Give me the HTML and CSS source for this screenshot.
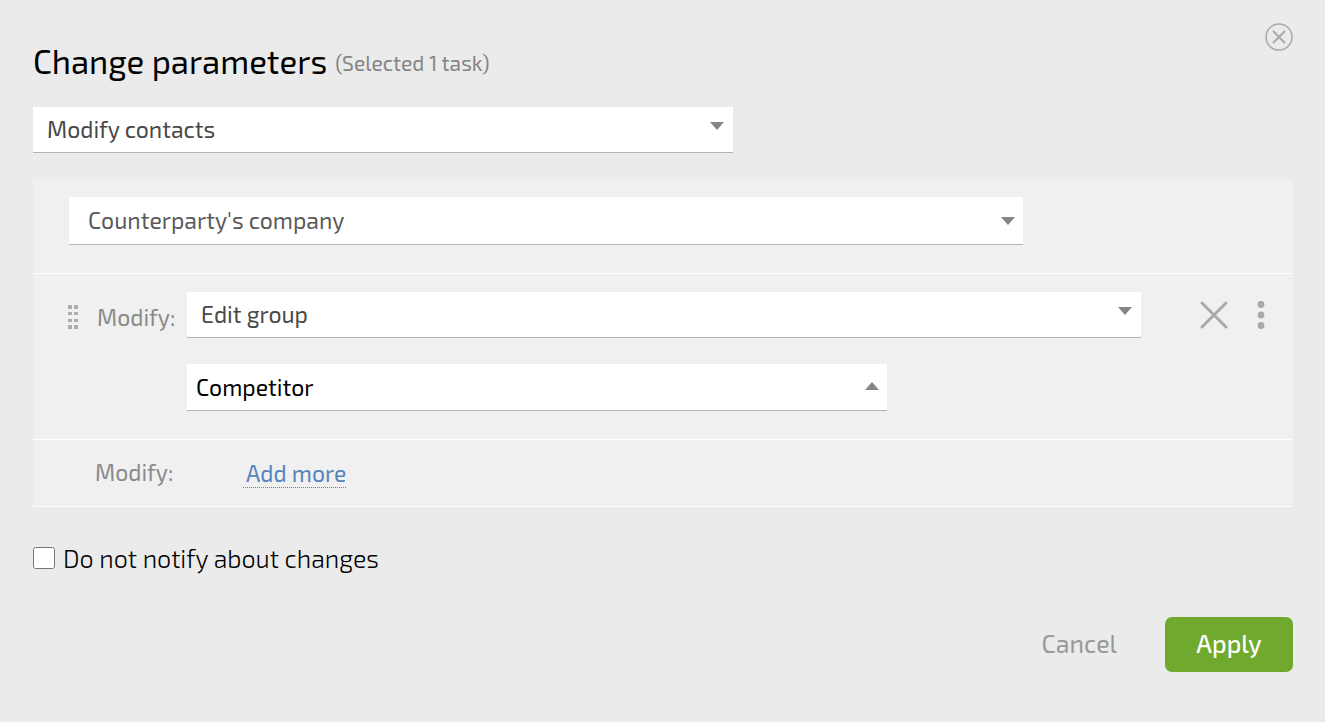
FILE: index.html
```html
<!DOCTYPE html>
<html lang="en">
<head>
    <meta charset="UTF-8">
    <meta name="viewport" content="width=device-width, initial-scale=1.0">
    <title>Change parameters</title>
    <link rel="stylesheet" href="styles.css">
</head>
<body>
    <form class="dialog">
        <header class="header">
            <div class="heading">
                <h1>Change parameters</h1>
                <span class="selected">(Selected 1 task)</span>
            </div>
            <button type="button" class="icon-button" aria-label="Close">
                <svg width="28" height="28" viewBox="0 0 28 28">
                    <circle cx="14" cy="14" r="13"/>
                    <path d="M8.5 8.5 19.5 19.5M19.5 8.5 8.5 19.5"/>
                </svg>
            </button>
        </header>

        <div class="select medium">
            <select aria-label="Action">
                <option>Modify contacts</option>
            </select>
        </div>

        <div class="panel">
            <div class="row">
                <div class="select large company">
                    <select aria-label="Contact">
                        <option>Counterparty's company</option>
                    </select>
                </div>
            </div>

            <div class="row rule">
                <svg class="drag" width="10" height="24" viewBox="0 0 10 24">
                    <path d="M0 0h4v4H0zM6 0h4v4H6zM0 7h4v3H0zM6 7h4v3H6zM0 14h4v3H0zM6 14h4v3H6zM0 20h4v4H0zM6 20h4v4H6z"/>
                </svg>
                <label class="label" for="operation">Modify:</label>
                <div class="fields">
                    <div class="select large">
                        <select id="operation">
                            <option>Edit group</option>
                        </select>
                    </div>
                    <div class="select medium open">
                        <select aria-label="Group">
                            <option>Competitor</option>
                        </select>
                    </div>
                </div>
                <div class="tools">
                    <button type="button" class="icon-button remove" aria-label="Remove">
                        <svg width="28" height="28" viewBox="0 0 28 28">
                            <path d="M2 2 26 26M26 2 2 26"/>
                        </svg>
                    </button>
                    <button type="button" class="icon-button more" aria-label="More">
                        <svg width="8" height="28" viewBox="0 0 8 28">
                            <circle cx="4" cy="3.5" r="3.4"/>
                            <circle cx="4" cy="14" r="3.4"/>
                            <circle cx="4" cy="24.5" r="3.4"/>
                        </svg>
                    </button>
                </div>
            </div>

            <div class="row add">
                <span class="label">Modify:</span>
                <a class="link" href="#">Add more</a>
            </div>
        </div>

        <label class="check">
            <input type="checkbox">
            Do not notify about changes
        </label>

        <footer class="footer">
            <button type="button" class="cancel">Cancel</button>
            <button type="submit" class="apply">Apply</button>
        </footer>
    </form>
</body>
</html>
```
FILE: styles.css
```css
* {
    box-sizing: border-box;
}
body {
    margin: 0;
    background-color: #ebebeb;
    font-family: "Exo 2", Roboto, sans-serif;
    font-size: 23px;
    line-height: 28px;
    color: #000;
}
select, button, input {
    font: inherit;
}
button {
    border: none;
    background: none;
    padding: 0;
}
.dialog {
    padding: 23px 32px 50px 33px;
}
.header {
    display: flex;
    justify-content: space-between;
    align-items: flex-start;
    margin-bottom: 26px;
}
.heading {
    display: flex;
    align-items: center;
    gap: 8px;
    padding-top: 18px;
}
h1 {
    margin: 0;
    font-size: 33px;
    line-height: 40px;
    font-weight: normal;
}
.selected {
    padding-top: 3px;
    font-size: 21px;
    color: #848484;
}
.icon-button {
    display: flex;
}
.icon-button svg {
    fill: none;
    stroke: #a9a9a9;
    stroke-width: 2;
    stroke-linecap: round;
}
.icon-button svg circle {
    stroke-width: 1.5;
}
.select {
    position: relative;
    width: 100%;
}
.select::after {
    content: "";
    position: absolute;
    top: 15px;
    right: 9px;
    width: 14px;
    height: 8px;
    background-color: #858585;
    clip-path: polygon(0 0, 100% 0, 50% 100%);
    pointer-events: none;
}
.select select {
    display: block;
    appearance: none;
    width: 100%;
    height: 46px;
    padding: 0 30px 2px 14px;
    border: none;
    border-bottom: 1px solid #b4b4b4;
    border-radius: 0;
    background-color: #fff;
    color: #484848;
}
.medium {
    max-width: 700px;
}
.large {
    max-width: 954px;
}
.company::after {
    top: 20px;
    right: 8px;
}
.company select {
    height: 48px;
    padding-left: 19px;
    color: #5a5a5a;
}
.open::after {
    top: 18px;
    right: 8px;
    clip-path: polygon(50% 0, 100% 100%, 0 100%);
}
.open select {
    height: 47px;
    padding: 0 30px 0 9px;
    color: #000;
}
.panel {
    margin-top: 26px;
    background-color: #f0f0f0;
}
.row {
    display: flex;
    align-items: flex-start;
    padding: 18px 28px 28px 36px;
    border-bottom: 1px solid #fff;
}
.drag {
    flex: none;
    margin: 13px 19px 0 0;
    fill: #adadad;
}
.label {
    flex: none;
    width: 90px;
    color: #8a8a8a;
}
.rule {
    padding-left: 35px;
}
.rule .label {
    margin-top: 11px;
}
.fields {
    display: grid;
    flex: 1;
    gap: 26px;
}
.tools {
    display: flex;
    gap: 29px;
    margin: 9px 0 0 28px;
}
.remove svg {
    stroke-width: 3;
}
.more svg {
    fill: #a9a9a9;
    stroke: none;
}
.add {
    gap: 58px;
    padding: 18px 28px 18px 62px;
}
.link {
    padding: 1px 0 0 3px;
    border-bottom: 1px dotted #5783bd;
    color: #5783bd;
    text-decoration: none;
}
.check {
    display: flex;
    align-items: center;
    gap: 8px;
    width: fit-content;
    margin-top: 37px;
    font-size: 25px;
    font-weight: 300;
}
.check input {
    width: 22px;
    height: 22px;
    margin: 0;
}
.footer {
    display: flex;
    justify-content: flex-end;
    gap: 48px;
    margin-top: 45px;
    font-size: 25px;
}
.footer button {
    height: 55px;
    padding-bottom: 3px;
}
.cancel {
    color: #999;
}
.apply {
    width: 128px;
    border-radius: 7px;
    background-color: #6fa92e;
    color: #fff;
    font-weight: 500;
}
```
